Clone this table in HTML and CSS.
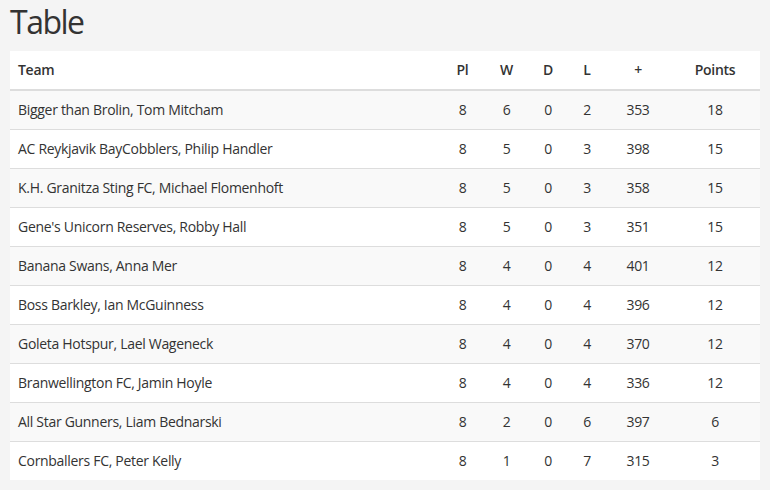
FILE: index.html
```html
<!DOCTYPE html>
<html>
<head>
<meta charset="utf-8">
<link rel="stylesheet" href="styles.css">
</head>
<body>
<h1 class="title">Table</h1>
<table class="league">
  <colgroup>
    <col class="c-team"><col class="c-pl"><col class="c-w"><col class="c-d"><col class="c-l"><col class="c-plus"><col class="c-pts">
  </colgroup>
  <thead>
    <tr><th class="team">Team</th><th>Pl</th><th>W</th><th>D</th><th>L</th><th>+</th><th>Points</th></tr>
  </thead>
  <tbody>
    <tr><td class="team">Bigger than Brolin, Tom Mitcham</td><td>8</td><td>6</td><td>0</td><td>2</td><td>353</td><td>18</td></tr>
    <tr><td class="team">AC Reykjavik BayCobblers, Philip Handler</td><td>8</td><td>5</td><td>0</td><td>3</td><td>398</td><td>15</td></tr>
    <tr><td class="team">K.H. Granitza Sting FC, Michael Flomenhoft</td><td>8</td><td>5</td><td>0</td><td>3</td><td>358</td><td>15</td></tr>
    <tr><td class="team">Gene's Unicorn Reserves, Robby Hall</td><td>8</td><td>5</td><td>0</td><td>3</td><td>351</td><td>15</td></tr>
    <tr><td class="team">Banana Swans, Anna Mer</td><td>8</td><td>4</td><td>0</td><td>4</td><td>401</td><td>12</td></tr>
    <tr><td class="team">Boss Barkley, Ian McGuinness</td><td>8</td><td>4</td><td>0</td><td>4</td><td>396</td><td>12</td></tr>
    <tr><td class="team">Goleta Hotspur, Lael Wageneck</td><td>8</td><td>4</td><td>0</td><td>4</td><td>370</td><td>12</td></tr>
    <tr><td class="team">Branwellington FC, Jamin Hoyle</td><td>8</td><td>4</td><td>0</td><td>4</td><td>336</td><td>12</td></tr>
    <tr><td class="team">All Star Gunners, Liam Bednarski</td><td>8</td><td>2</td><td>0</td><td>6</td><td>397</td><td>6</td></tr>
    <tr><td class="team">Cornballers FC, Peter Kelly</td><td>8</td><td>1</td><td>0</td><td>7</td><td>315</td><td>3</td></tr>
  </tbody>
</table>
</body>
</html>
```
FILE: styles.css
```css
html, body {
  margin: 0;
  background: #f4f4f4;
}
body {
  padding: 0 10px;
  font-family: "Open Sans", "Noto Sans", sans-serif;
  color: #333;
  font-size: 14px;
}
.title {
  margin: 0;
  padding-top: 3px;
  height: 48px;
  font-weight: 400;
  font-size: 32px;
  line-height: 38px;
  letter-spacing: -1.5px;
}
.league {
  width: 750px;
  border-collapse: collapse;
  table-layout: fixed;
  background: #fff;
  letter-spacing: -0.3px;
}
.c-team { width: 430px; }
.c-pl { width: 45px; }
.c-w { width: 43px; }
.c-d { width: 40px; }
.c-l { width: 38px; }
.c-plus { width: 64px; }
.c-pts { width: 90px; }
.league th, .league td {
  text-align: center;
  padding: 0 0 2px;
  white-space: nowrap;
}
.league th {
  height: 36px;
  font-weight: 600;
  border-bottom: 2px solid #dddddd;
}
.league td {
  height: 36px;
  border-top: 1px solid #dddddd;
}
.league tbody tr:first-child td {
  border-top: none;
}
.league tbody tr:nth-child(odd) {
  background: #f9f9f9;
}
.league .team {
  text-align: left;
  padding-left: 8px;
}
```
